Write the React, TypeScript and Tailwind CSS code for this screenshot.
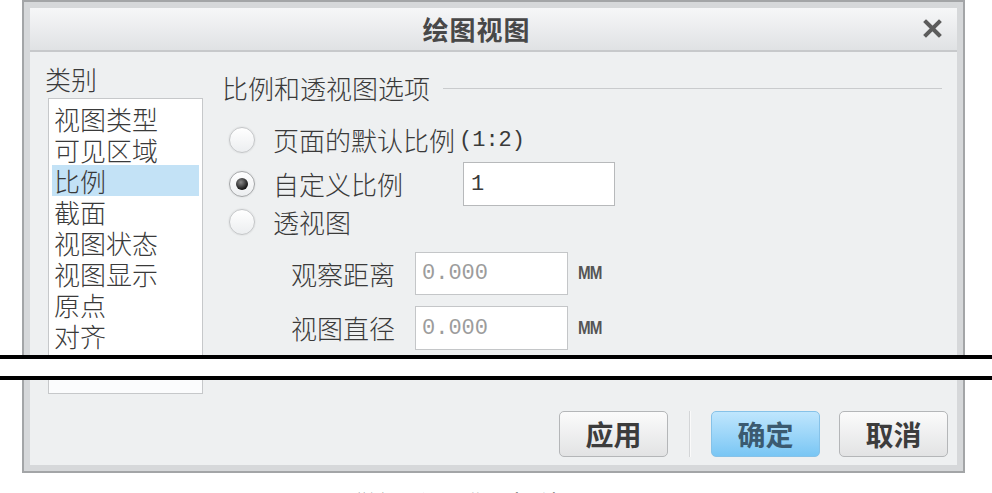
const cjk = "font-['Noto_Sans_CJK_SC','Noto_Sans',sans-serif]";
const mono = "font-['Liberation_Mono','Noto_Sans_CJK_SC',monospace]";

const categories = ['视图类型', '可见区域', '比例', '截面', '视图状态', '视图显示', '原点', '对齐'];

function Radio({ checked }: { checked?: boolean }) {
  return (
    <span
      className={`flex h-[26px] w-[26px] shrink-0 items-center justify-center rounded-full border bg-gradient-to-b from-white to-[#eceef0] shadow-[0_0_2px_rgba(0,0,0,0.12)] ${
        checked ? 'border-[#a4a6a8]' : 'border-[#c4c6c8]'
      }`}
    >
      {checked && (
        <span className="h-[12px] w-[12px] rounded-full bg-[radial-gradient(circle_at_40%_35%,#8a8a8a,#151515_70%)]" />
      )}
    </span>
  );
}

function Frame({ children, part }: { children: React.ReactNode; part: 'top' | 'bottom' }) {
  return (
    <div
      className={`ml-[22px] w-[943px] border-x-2 border-[#a3a5a7] bg-[#d6d8da] px-[6px] ${
        part === 'top' ? 'h-[355px] overflow-hidden border-t-2 pt-[6px]' : 'border-b-2 pb-[6px]'
      }`}
    >
      {children}
    </div>
  );
}

function Button({ label, primary }: { label: string; primary?: boolean }) {
  return (
    <button
      className={`h-[46px] w-[109px] rounded-[5px] border text-[28px] font-bold leading-none ${
        primary
          ? 'border-[#86c2e8] bg-gradient-to-b from-[#bfe6fd] to-[#79c6f4] text-[#3b5a70]'
          : 'border-[#b4b6b8] bg-gradient-to-b from-[#fbfbfb] to-[#e2e3e4] text-[#3c3c3c]'
      }`}
    >
      {label}
    </button>
  );
}

export default function App() {
  return (
    <div className={`min-h-screen bg-white text-[#3a3a3a] ${cjk}`}>
      <Frame part="top">
        <div className="flex h-[44px] items-center border-b-2 border-[#c7c9cb] bg-gradient-to-b from-[#f6f7f8] to-[#e0e2e4] pb-[2px]">
          <h1 className="flex-1 text-center text-[26px] font-bold tracking-[1px] text-[#484848]">绘图视图</h1>
          <svg viewBox="0 0 19 19" className="mr-[15px] h-[19px] w-[19px]">
            <path d="M3 3 L16 16 M16 3 L3 16" stroke="#5c5c5c" strokeWidth="4" strokeLinecap="square" />
          </svg>
        </div>

        <div className="flex h-full bg-[#eef0f1] pl-[15px] pt-[12px]">
          <div className="w-[158px] shrink-0">
            <p className="text-[26px] font-light leading-[30px]">类别</p>
            <ul className="ml-[3px] mt-[4px] h-[400px] w-[155px] border border-[#c6c8ca] bg-white px-[3px] pt-[4px]">
              {categories.map((c) => (
                <li
                  key={c}
                  className={`pl-[2px] text-[26px] font-light leading-[31px] ${c === '比例' ? 'bg-[#c3e2f6]' : ''}`}
                >
                  {c}
                </li>
              ))}
            </ul>
          </div>

          <div className="ml-[19px] flex-1 pr-[15px] pt-[9px]">
            <div className="flex items-center">
              <span className="text-[26px] font-light leading-[30px]">比例和透视图选项</span>
              <span className="ml-[13px] h-px flex-1 bg-[#c9cbcd]" />
            </div>

            <div className="mt-[22px] flex h-[30px] items-center pl-[7px]">
              <Radio />
              <span className="ml-[18px] text-[26px] font-light leading-[30px]">页面的默认比例</span>
              <span className={`ml-[4px] ${mono} text-[22px]`}>(1:2)</span>
            </div>

            <div className="mt-[7px] flex h-[44px] items-center pl-[7px]">
              <Radio checked />
              <span className="ml-[18px] w-[190px] text-[26px] font-light leading-[30px]">自定义比例</span>
              <div className={`flex h-[44px] w-[152px] items-center border border-[#b7b9bb] bg-white pl-[7px] ${mono} text-[22px]`}>
                1
              </div>
            </div>

            <div className="mt-px flex h-[30px] items-center pl-[7px]">
              <Radio />
              <span className="ml-[18px] text-[26px] font-light leading-[30px]">透视图</span>
            </div>

            {[
              ['观察距离', 'mt-[15px] h-[43px]'],
              ['视图直径', 'mt-[11px] h-[44px]'],
            ].map(([label, cls]) => (
              <div key={label} className={`flex items-center ${cls}`}>
                <span className="w-[173px] text-right text-[26px] font-light leading-[30px]">{label}</span>
                <div className={`ml-[20px] flex h-full w-[153px] items-center border border-[#c4c6c8] bg-white pl-[6px] ${mono} text-[22px] text-[#9c9c9c]`}>
                  0.000
                </div>
                <span className="ml-[10px] inline-block origin-left scale-x-[0.8] font-['Liberation_Sans',sans-serif] text-[19px] font-bold tracking-[-1px] text-[#555]">
                  MM
                </span>
              </div>
            ))}
          </div>
        </div>
      </Frame>

      <div className="h-[25px] w-full border-y-4 border-black bg-white" />

      <Frame part="bottom">
        <div className="flex h-[85px] flex-col bg-[#eef0f1]">
          <div className="ml-[18px] h-[14px] w-[155px] border-x border-b border-[#c6c8ca] bg-[#fbfcfd]" />
          <div className="mt-[17px] flex items-center justify-end pr-[9px]">
            <Button label="应用" />
            <span className="mx-[21px] h-[46px] w-px bg-[#d3d5d7] shadow-[1px_0_0_#fafafa]" />
            <Button label="确定" primary />
            <span className="w-[19px]" />
            <Button label="取消" />
          </div>
        </div>
      </Frame>

      <p className="mt-[16px] pl-[250px] text-[26px] leading-[30px] text-[#222]">图 5-20 “绘图视图”对话框</p>
    </div>
  );
}
